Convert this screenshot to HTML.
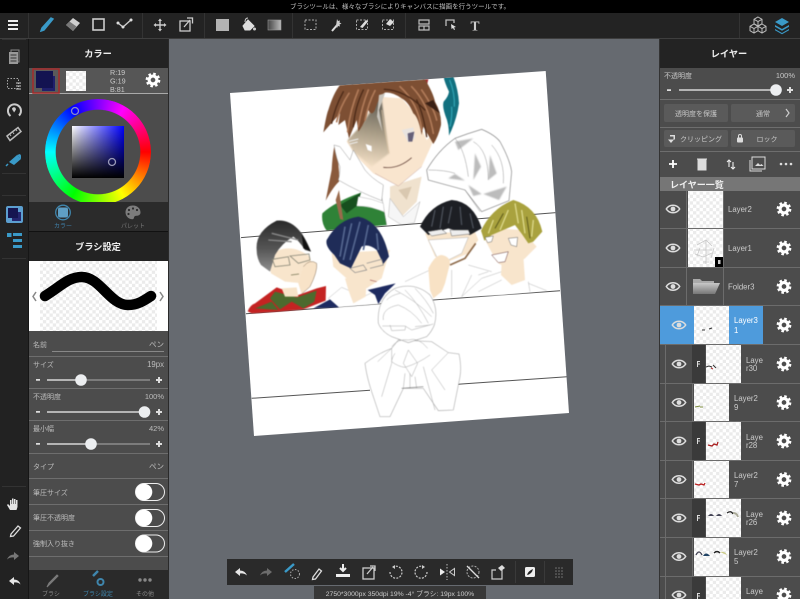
<!DOCTYPE html>
<html><head><meta charset="utf-8">
<style>
html,body{margin:0;padding:0;width:800px;height:599px;overflow:hidden;background:#666a70}
svg{position:absolute;left:0;top:0;filter:blur(.3px)}
text{font-family:"Liberation Sans","Noto Sans CJK JP",sans-serif}
#wheel{position:absolute;left:45px;top:99px;width:106px;height:103px;overflow:hidden;filter:blur(.3px)}
#wheel i{display:block;width:106px;height:106px;border-radius:50%;background:conic-gradient(from 30deg,#f0f,#f00 60deg,#ff0 120deg,#0f0 180deg,#0ff 240deg,#00f 300deg,#f0f 360deg);-webkit-mask:radial-gradient(circle at 53px 53px,transparent 42px,#000 42.6px);mask:radial-gradient(circle at 53px 53px,transparent 42px,#000 42.6px)}
#sq{position:absolute;left:72px;top:126px;width:52px;height:52px;background:linear-gradient(to bottom,transparent,#000),linear-gradient(to right,#fff,#00f)}
</style></head><body>
<svg width="800" height="599" viewBox="0 0 800 599">
<defs>
<pattern id="ck" width="6.6" height="6.6" patternUnits="userSpaceOnUse"><rect width="6.6" height="6.6" fill="#fff"/><rect width="3.3" height="3.3" fill="#ebebeb"/><rect x="3.3" y="3.3" width="3.3" height="3.3" fill="#ebebeb"/></pattern>
<symbol id="gear" overflow="visible"><circle r="3.9" fill="none" stroke="#fff" stroke-width="3.1"/><circle r="6.2" fill="none" stroke="#fff" stroke-width="2.3" stroke-dasharray="2.55 2.32"/></symbol>
<symbol id="eye" overflow="visible"><path d="M-6.7 0C-3.6-5 3.6-5 6.7 0C3.6 5-3.6 5-6.7 0Z" fill="none" stroke="#ddd" stroke-width="1.5"/><circle r="2.4" fill="#ddd"/></symbol>
<linearGradient id="shade" x1="0.5" y1="0" x2="0.4" y2="1"><stop offset="0" stop-color="#58564f"/><stop offset=".5" stop-color="#a89c86"/><stop offset="1" stop-color="#f6e2c8"/></linearGradient>
<linearGradient id="gh" x1="0" y1="0" x2="0" y2="1"><stop offset="0" stop-color="#2a2a2a"/><stop offset=".55" stop-color="#555"/><stop offset="1" stop-color="#8f8f8f"/></linearGradient>
<linearGradient id="fold" x1="0" y1="0" x2="0" y2="1"><stop offset="0" stop-color="#c8c8c8"/><stop offset="1" stop-color="#777"/></linearGradient>
<linearGradient id="tg"><stop offset="0" stop-color="#444"/><stop offset="1" stop-color="#bbb"/></linearGradient>
<clipPath id="pg"><polygon points="230,93 545.7,71 569,413 254,436"/></clipPath>
</defs>

<rect width="800" height="599" fill="#666a70"/>
<polygon points="230,93 545.7,71 569,413 254,436" fill="#fff"/>
<g clip-path="url(#pg)"><g style="filter:blur(.45px)">
<g transform="translate(225 70) scale(.33333)">
 <path d="M656 22L685 20Q700 60 702 100Q695 150 672 197Q672 170 666 150Q650 110 656 95Q670 80 672 65Q660 40 656 22Z" fill="#12707f"/>
 <path d="M674 30Q690 70 688 110M680 110Q682 140 675 170" stroke="#2fa0b0" stroke-width="4" fill="none"/>
 <path d="M592 28L610 27L606 46Z" fill="#a03030"/>
 <path d="M292 430Q330 395 408 368L395 408Q450 410 487 432L487 465L305 482Q288 460 292 430Z" fill="#2f8237"/>
 <path d="M345 405L408 368L395 408L365 430Z" fill="#174f1e"/>
 <path d="M470 380L500 345L585 325L610 330L720 360L765 425L750 450L560 465L485 465Z" fill="#fff"/>
 <path d="M470 380L485 465M720 360L765 425" stroke="#999" stroke-width="1.5" fill="none"/>
 <path d="M495 350L590 320L575 395L530 440L495 390Z" fill="#f0e2ce"/>
 <path d="M520 360L545 390L560 350Z" fill="#d9c8b0"/>
 <path d="M495 385L535 440L585 395L568 458L530 465L490 440Z" fill="#f6f6f6" stroke="#b5b5b5" stroke-width="1.5"/>
 <!-- right glove -->
 <path d="M605 300Q640 240 690 205Q730 190 770 178Q810 195 825 215Q855 270 860 305L852 392L770 425L720 360L610 330Z" fill="#fff" stroke="#777" stroke-width="1.800"/>
 <g style="filter:blur(1.5px)"><path d="M730 345L770 372L745 378ZM775 372L845 350L822 390ZM690 312L720 332L670 325ZM750 250L768 290L745 330ZM795 255L815 310L790 330ZM690 215L745 205L700 240Z" fill="#bcbcbc"/></g>
 <path d="M690 205Q720 240 730 320M745 215Q790 240 790 330M800 225Q840 270 835 340M610 300Q660 300 690 310" stroke="#999" stroke-width="1.500" fill="none"/>
 <!-- face -->
 <path d="M460 80L530 85L570 130L605 210L640 175L615 235L590 290L520 348L445 310L395 260L365 215L400 175Z" fill="#f9e5ce"/>
 <g style="filter:blur(2px)"><path d="M468 78L492 250L440 290L385 245L368 210L410 165Z" fill="url(#shade)"/></g>
 <path d="M470 120Q480 190 492 250" stroke="#d8c0a0" stroke-width="2" fill="none"/>
 <!-- hair -->
 <path d="M345 45L600 28Q625 70 630 95Q650 130 648 165Q640 200 625 222L595 170L590 195Q580 140 565 130Q550 95 530 85Q500 65 480 68Q462 78 450 120Q440 140 430 120Q420 160 400 185L395 150L372 205L360 150L340 165L345 130L295 187Q305 130 310 120Q325 70 345 45Z" fill="#7d4f33"/>
 <g fill="none" stroke-linecap="round">
 <path d="M372 70Q345 110 335 155M400 60Q375 120 368 185M430 60Q410 110 400 170M450 62Q430 100 420 150M525 50Q580 100 590 180M560 50Q610 100 625 190M590 60Q625 110 635 150" stroke="#b07a58" stroke-width="5"/>
 <path d="M355 65Q330 110 320 160M415 60Q390 110 385 170M478 58Q540 60 600 120M575 90Q595 130 605 200" stroke="#4c2a18" stroke-width="4"/>
 </g>
 <path d="M600 100L645 130L625 90Z" fill="#3a2015"/>
 <path d="M462 75L480 70L462 120L472 185L456 140Z" fill="#c9c5bd"/>
 <path d="M328 228Q345 280 342 335Q325 350 302 392Q312 340 320 300Q322 260 328 228Z" fill="#8a5a3c"/>
 <path d="M332 390L342 360L355 450L345 447Z" fill="#9a6a4c"/>
 <!-- left glove -->
 <path d="M327 225Q335 270 345 290Q345 315 340 330Q400 365 470 392L475 345Q440 325 420 300L385 240L375 270L345 230Z" fill="#fff" stroke="#999" stroke-width="1.500"/>
 <path d="M400 380L440 388L475 400L478 425L430 410L395 408Z" fill="#fff" stroke="#aaa" stroke-width="1.200"/>
 <path d="M422 222L440 228L440 245L428 240Z" fill="#fff"/>
 <path d="M372 214L400 207M374 222L398 216" stroke="#eee" stroke-width="3"/>
 <path d="M530 180L565 172L570 205L550 218Z" fill="#e9e4e0"/>
 <path d="M548 190L568 185L562 215L550 215Z" fill="#666078"/>
 <path d="M475 292Q520 298 560 263" stroke="#6a4a40" stroke-width="2.500" fill="none"/>
 <path d="M450 310L520 348L590 290" stroke="#b99" stroke-width="1.200" fill="none"/>
</g>
</g>

<g stroke="#555" stroke-width="1" fill="none">
<line x1="241" y1="237.6" x2="556" y2="212.6"/>
<line x1="246" y1="313.7" x2="560" y2="290.7"/>
<line x1="251.7" y1="398.3" x2="370" y2="390.200"/><line x1="458" y1="384.200" x2="568" y2="376.700"/>
</g>

<g style="filter:blur(.45px)">
<g transform="translate(235 200) scale(.33333)">
 <!-- char1 -->
 <path d="M38 334Q45 315 60 310L125 262L190 285L245 265L273 258L272 302L205 328L130 335L50 340Z" fill="#c42322"/>
 <path d="M120 275L185 292L245 272L238 305L205 325L170 305L135 328L105 295Z" fill="#4c6a2e"/>
 <path d="M60 325L110 305L130 330Z" fill="#4c6a2e"/>
 <path d="M140 265L185 262L190 290L150 290Z" fill="#f7e3c8"/>
 <path d="M98 170Q160 120 225 170L232 205L205 250L150 245L108 220Z" fill="#f8e5cc"/>
 <path d="M205 200Q225 175 245 190Q248 215 225 260L200 282L190 250Z" fill="#f8e3c8"/>
 <path d="M205 200Q225 175 245 190Q248 215 225 260L200 282" fill="none" stroke="#8a7560" stroke-width="1.500"/>
 <path d="M65 150Q60 95 125 62Q190 55 228 155L210 150Q190 120 175 110Q140 130 120 165L105 215L78 195Q65 175 65 150Z" fill="url(#gh)"/>
 <path d="M200 100L228 155L205 145Z" fill="#111"/>
 <path d="M110 100L190 120M100 120L170 125" stroke="#8a8a8a" stroke-width="4"/>
 <path d="M112 178L160 170L165 195L120 200ZM165 168L222 162L225 180L190 190Z" fill="none" stroke="#8a8878" stroke-width="2.500"/>
 <path d="M168 225L192 222" stroke="#775" stroke-width="2"/>
 <!-- char2 -->
 <path d="M280 295L320 262L385 290L425 272L435 312L310 322Z" fill="#fff" stroke="#aaa" stroke-width="1.200"/>
 <path d="M235 325L285 298L312 322ZM398 270L482 250L450 280L430 312L420 285Z" fill="#1d2a60"/>
 <path d="M340 270L330 235L395 235L392 290L355 310Z" fill="#f8e5cc"/>
 <path d="M290 160L465 150L440 235L395 265L340 240L295 200Z" fill="#f8e5cc"/>
 <path d="M275 120Q310 58 370 50Q440 65 462 170L445 192Q435 170 425 150Q400 130 380 140L348 205L315 190L298 165Q270 140 275 120Z" fill="#1f2c58"/>
 <path d="M330 80L315 170M350 70L325 180M375 65L345 180M400 75L385 150M425 100L430 150" stroke="#54668f" stroke-width="5" fill="none"/>
 <path d="M345 205L385 195L395 210L360 218ZM395 190L440 178L445 195L405 205" fill="none" stroke="#888" stroke-width="2"/>
 <path d="M405 240L425 245" stroke="#a66" stroke-width="2"/>
 <!-- char3 -->
 <path d="M510 245L585 210L640 215L700 195L770 215L760 280L625 295L520 300Z" fill="#fff"/>
 <path d="M510 245L585 210M700 195L770 215M650 210L650 290M680 290L710 225M730 225L760 215" stroke="#aaa" stroke-width="1.300" fill="none"/>
 <path d="M570 100L720 95L730 120L700 160L640 185L600 170Z" fill="#f8e5cc"/>
 <path d="M580 120L700 112L680 160L640 180L605 170Z" fill="#fff" stroke="#aaa" stroke-width="1.300"/>
 <path d="M555 80Q585 15 650 0Q715 5 740 85L705 105L640 85L580 105Z" fill="#1d1f24"/>
 <path d="M600 30L590 80M625 20L615 85M650 20L640 70M675 20L680 75M705 40L715 85" stroke="#4a4f58" stroke-width="4" fill="none"/>
 <path d="M578 95L620 88L635 100L590 108ZM645 90L700 90L705 102L650 108Z" fill="#eee" stroke="#666" stroke-width="1.500"/>
 <path d="M580 205Q600 165 620 165Q645 170 645 190L630 250L620 275L595 295L585 270Z" fill="#f8e2c5"/>
 <path d="M645 195L690 175L722 130" stroke="#8d6a4a" stroke-width="5" fill="none"/>
 <!-- char4 -->
 <path d="M680 290L740 235L800 215L880 260L935 272L800 285Z" fill="#fff"/>
 <path d="M680 290L740 235L800 215M880 250L935 272M730 275L800 240M880 245L885 275" stroke="#aaa" stroke-width="1.300" fill="none"/>
 <path d="M800 190L865 170L870 240L830 255L798 225Z" fill="#f8e5cc"/>
 <path d="M745 110L780 85L860 90L905 140L870 175L830 205Q800 200 785 185Z" fill="#f8e5cc"/>
 <path d="M738 92Q770 25 835 0Q905 20 922 95L895 125L880 130Q860 100 840 75L770 105L748 122Z" fill="#a9a23e"/>
 <path d="M775 60L760 100M820 30L795 90M860 30L870 100M895 60L890 110M840 10L850 70" stroke="#dcd88a" stroke-width="4" fill="none"/>
 <path d="M805 40L780 85M875 50L885 115" stroke="#5d5a1c" stroke-width="3"/>
 <path d="M770 165L820 155L810 185L790 188Z" fill="#fff" stroke="#6a4040" stroke-width="1.500"/>
 <path d="M820 115L848 112L845 140L828 135ZM750 112L775 108L770 125L758 128Z" fill="#fff" stroke="#555" stroke-width="1.300"/>
 <!-- sketch man -->
 <path d="M390 490Q430 460 470 445L490 420L590 425L640 458L672 462Q680 500 675 530L655 630L610 632L565 565L505 565L465 650L435 650L410 575Q395 530 390 490Z" fill="#fff" stroke="#a0a0a0" stroke-width="1.600"/>
 <path d="M430 370Q425 295 480 265Q540 245 585 285Q612 325 598 375Q590 395 575 410L520 428L470 410Q440 395 430 370Z" fill="#fff" stroke="#a0a0a0" stroke-width="1.600"/>
 <g fill="none" stroke="#aaa" stroke-width="1.500">
  <path d="M445 360Q440 325 490 315Q530 330 560 370M480 270Q540 300 590 350M510 270Q550 310 580 370M540 265Q575 300 595 340M455 300Q470 285 495 280"/>
  <path d="M442 378L510 378L530 390L595 372M465 375L470 392L510 390L512 378M540 380L585 375"/>
  <path d="M470 440Q490 415 520 420Q550 410 578 445M480 460Q470 475 470 485Q490 500 510 502Q550 490 585 465M520 450L505 490L530 530L548 490Z"/>
  <path d="M428 485L470 445L470 490M640 458L590 510L630 570M440 590L470 490M510 520L505 565M525 520L525 565M540 530L545 565M565 500L600 630"/>
  <path d="M500 565L565 560" stroke="#555"/>
 </g>
</g>
</g></g>

<!-- top bars -->
<rect width="800" height="13" fill="#000"/>
<text x="400" y="8.3" font-size="6.5" fill="#c0c0c0" text-anchor="middle">ブラシツールは、様々なブラシによりキャンバスに描画を行うツールです。</text>
<rect y="13" width="800" height="25" fill="#232323"/>
<rect y="38" width="800" height="1" fill="#3e3e3e"/>
<g stroke="#333" stroke-width="1"><path d="M28.5 13v25M142.5 13v25M204.500 13v25M292.500 13v25M405.500 13v25M739.500 13v25"/></g>

<!-- left sidebar -->
<rect y="39" width="28" height="560" fill="#222"/>
<rect x="28" y="39" width="1" height="560" fill="#161616"/>
<g stroke="#333"><path d="M2 39.500h24M2 173.500h24M2 195.500h24M2 258.500h24M2 486.500h24"/></g>

<!-- left panel -->
<rect x="29" y="39" width="140" height="560" fill="#4c4c4c"/>
<rect x="168" y="39" width="1" height="560" fill="#2a2a2a"/>
<rect x="29" y="39" width="139" height="29" fill="#232323"/>
<text x="98" y="57" font-size="9.200" font-weight="bold" fill="#eee" text-anchor="middle">カラー</text>
<rect x="29" y="68" width="139" height="25" fill="#565656"/>
<rect x="29" y="93" width="139" height="1" fill="#aaa"/>
<rect x="33" y="69" width="26" height="24" fill="#5a5a5a" stroke="#a52a2a" stroke-width="1.500"/>
<rect x="42" y="76" width="13" height="15" fill="#20206c"/>
<rect x="36" y="71" width="17" height="17" fill="#131351"/>
<rect x="66" y="71" width="20" height="20" fill="url(#ck)"/>
<g font-size="7.200" fill="#c8c8c8"><text x="110" y="75">R:19</text><text x="110" y="83.500">G:19</text><text x="110" y="92">B:81</text></g>
<use href="#gear" x="153" y="80"/>

<rect x="29" y="202" width="139" height="29" fill="#2b2b2b"/>
<rect x="29" y="231" width="139" height="1" fill="#111"/>
<circle cx="63" cy="212.500" r="7.300" fill="none" stroke="#3f86ad" stroke-width="1.300"/>
<rect x="58" y="207.500" width="10" height="10" rx="2" fill="#5f9fc4"/>
<text x="63" y="228" font-size="6" fill="#3f7fa8" text-anchor="middle">カラー</text>
<path d="M133 205.500c-4.600 0-7.500 3-7.500 6.800 0 3.700 3 6.900 6.800 6.900 2.300 0 1.200-2.400 2.600-3.100 1.400-.6 5.600.3 5.600-3.700 0-4-3.300-6.900-7.500-6.900Z" fill="#7c7c7c"/>
<g fill="#2b2b2b"><circle cx="129" cy="210" r="1.100"/><circle cx="133" cy="208.500" r="1.100"/><circle cx="137" cy="210" r="1.100"/><circle cx="128.500" cy="214" r="1.100"/></g>
<text x="133" y="228" font-size="6" fill="#777" text-anchor="middle">パレット</text>

<rect x="29" y="232" width="139" height="29" fill="#232323"/>
<text x="98" y="250" font-size="9.200" font-weight="bold" fill="#eee" text-anchor="middle">ブラシ設定</text>
<rect x="29" y="261" width="139" height="70" fill="#fff"/>
<rect x="40" y="261" width="117" height="70" fill="url(#ck)"/>
<path d="M45 296C60 287 68 277 82 277C100 277 110 305 128 305C138 305 145 300 151 296" fill="none" stroke="#000" stroke-width="10.500" stroke-linecap="round"/>
<path d="M36 292l-3 4.500 3 4.500M160 292l3 4.500-3 4.500" fill="none" stroke="#888" stroke-width="1.500"/>

<g fill="#bdbdbd" font-size="7">
<text x="33" y="347">名前</text>
<text x="33" y="367">サイズ</text>
<text x="33" y="399">不透明度</text>
<text x="33" y="431">最小幅</text>
<text x="33" y="469">タイプ</text>
<text x="33" y="495">筆圧サイズ</text>
<text x="33" y="520">筆圧不透明度</text>
<text x="33" y="546">強制入り抜き</text>
<g text-anchor="end" font-size="7.500"><text x="164" y="347">ペン</text><text x="164" y="367" font-size="7.800">19px</text><text x="164" y="399">100%</text><text x="164" y="431">42%</text><text x="164" y="469">ペン</text></g>
</g>
<g stroke="#6e6e6e"><path d="M52 351.500h112" stroke="#888"/><path d="M29 356.500h139M29 388.500h139M29 420.500h139M29 453.500h139M29 478.500h139M29 504.500h139M29 530.500h139M29 556.500h139"/></g>
<g fill="none" stroke-width="1.200">
<path d="M47 380h34M47 412h98M47 444h44" stroke="#f2f2f2"/>
<path d="M81 380h69M91 444h59" stroke="#999"/>
</g>
<g fill="#eceef0"><circle cx="81" cy="380" r="5.800"/><circle cx="144.500" cy="412" r="5.800"/><circle cx="91" cy="444" r="5.800"/></g>
<g fill="#ddd"><path d="M36 379h4v1.800h-4zM36 411h4v1.800h-4zM36 443h4v1.800h-4z"/><path d="M156 379h6v2h-6zM158 377h2v6h-2zM156 411h6v2h-6zM158 409h2v6h-2zM156 443h6v2h-6zM158 441h2v6h-2z"/></g>
<g fill="none" stroke="#eee" stroke-width="1"><rect x="135.500" y="483.500" width="29" height="17" rx="8.500"/><rect x="135.500" y="509.500" width="29" height="17" rx="8.500"/><rect x="135.500" y="535" width="29" height="17" rx="8.500"/></g>
<g fill="#fff"><circle cx="144" cy="492" r="8.300"/><circle cx="144" cy="518" r="8.300"/><circle cx="144" cy="543.500" r="8.300"/></g>

<rect x="29" y="570" width="139" height="29" fill="#2a2a2a"/>
<path d="M47 587l2-4 8-8 1 1-8 8Z" fill="#7a7a7a" stroke="#7a7a7a"/>
<path d="M93 576l5-5" stroke="#3f86ad" stroke-width="2.500"/><circle cx="100.500" cy="582" r="3" fill="none" stroke="#3f86ad" stroke-width="2"/>
<g fill="#888"><circle cx="140" cy="580" r="1.700"/><circle cx="145" cy="580" r="1.700"/><circle cx="150" cy="580" r="1.700"/></g>
<g font-size="6" text-anchor="middle"><text x="51" y="596" fill="#888">ブラシ</text><text x="98" y="596" fill="#3f86ad">ブラシ設定</text><text x="145" y="596" fill="#888">その他</text></g>

<!-- right panel -->
<rect x="660" y="39" width="140" height="560" fill="#4c4c4c"/>
<rect x="659" y="39" width="1" height="560" fill="#333"/>
<rect x="660" y="39" width="140" height="29" fill="#232323"/>
<text x="729" y="57" font-size="9.200" font-weight="bold" fill="#eee" text-anchor="middle">レイヤー</text>
<text x="664" y="78" font-size="7" fill="#c8c8c8">不透明度</text>
<text x="795" y="78" font-size="7.500" fill="#c8c8c8" text-anchor="end">100%</text>
<path d="M679 90h92" stroke="#f2f2f2" stroke-width="1.200"/>
<circle cx="776" cy="90" r="5.800" fill="#eceef0"/>
<path d="M667 89.200h4v1.800h-4zM787 89h6v2h-6zM789 87h2v6h-2z" fill="#ddd"/>
<g stroke="#6e6e6e"><path d="M660 99.500h140M660 127.500h140M660 151.500h140"/></g>
<g fill="#5a5a5a"><rect x="664" y="104" width="64" height="18" rx="2"/><rect x="731" y="104" width="64" height="18" rx="2"/><rect x="664" y="130" width="64" height="17" rx="2"/><rect x="731" y="130" width="64" height="17" rx="2"/></g>
<g font-size="7" fill="#c8c8c8" text-anchor="middle"><text x="696" y="116">透明度を保護</text><text x="763" y="116">通常</text><text x="701" y="141.500">クリッピング</text><text x="767" y="141.500">ロック</text></g>
<path d="M786 109l3 4-3 4" fill="none" stroke="#ccc" stroke-width="1.200"/>
<path d="M675 135h-5v1.500h3.500v3h-5.500l3 3.500 3-3.500h1Z" fill="#ddd"/>
<rect x="737" y="137.500" width="6" height="5" rx="1" fill="#ddd"/><path d="M738.500 137.500v-1.500a1.500 1.500 0 0 1 3 0v1.500" fill="none" stroke="#ddd"/>
<path d="M669 164h8M673 160v8" stroke="#fff" stroke-width="1.800"/>
<path d="M698 160h8v10h-8zM697 159h10" fill="#ddd" stroke="#ddd"/>
<path d="M729 160v7M727 162l2-2 2 2M733 169v-7M731 167l2 2 2-2" fill="none" stroke="#eee" stroke-width="1.100"/>
<rect x="752" y="157" width="13" height="12" fill="#4c4c4c" stroke="#ddd"/><path d="M750 160v11h12" fill="none" stroke="#ddd"/><path d="M755 166l3-3 2 2 1.500-1 2 2Z" fill="#ddd"/>
<g fill="#ddd"><circle cx="781" cy="164" r="1.300"/><circle cx="786" cy="164" r="1.300"/><circle cx="791" cy="164" r="1.300"/></g>
<rect x="660" y="177" width="140" height="14" fill="#767676"/>
<text x="670" y="188" font-size="9" font-weight="bold" fill="#f0f0f0">レイヤー一覧</text>

<g stroke="#6c6c6c"><path d="M660 228.500h140M660 267.500h140M660 305.500h140M660 344.500h140M660 383.500h140M660 421.500h140M660 460.500h140M660 498.500h140M660 537.500h140M660 576.500h140"/></g>
<g stroke="#6c6c6c"><path d="M686.500 191v115M723.500 191v115M665.500 306v293M692.500 306v293"/></g>

<rect x="688" y="191" width="35" height="37" fill="url(#ck)"/>
<rect x="688" y="229" width="35" height="38" fill="url(#ck)"/>
<g stroke="#c8c8c8" fill="none" stroke-width=".8"><path d="M697 245l9-5 6 6M694 250h18M695 254l8 3 9-4M706 240v24M700 248l-3 8M714 248l-3 10M703 262h6"/></g>
<rect x="715" y="257" width="8" height="10" fill="#000"/><rect x="718" y="260" width="2.500" height="4" fill="#ccc"/>
<path d="M693 279h7l2 2h12v4h-21Z" fill="#aaa"/><path d="M693 283h27l-5 11h-22Z" fill="url(#fold)"/>

<rect x="660" y="306" width="34" height="38" fill="#4e9bdc"/>
<rect x="729" y="306" width="34" height="38" fill="#4e9bdc"/>
<rect x="694" y="306" width="35" height="38" fill="url(#ck)"/>
<path d="M702 330h3M709 329l3-1" stroke="#333" stroke-width="1"/>

<g fill="#3a3a3a"><rect x="692" y="345" width="13" height="38"/><rect x="692" y="422" width="13" height="38"/><rect x="692" y="499" width="13" height="38"/><rect x="692" y="577" width="13" height="22"/></g>
<g fill="url(#ck)">
<rect x="706" y="345" width="35" height="38"/><rect x="694" y="384" width="35" height="37"/>
<rect x="706" y="422" width="35" height="38"/><rect x="694" y="461" width="35" height="37"/>
<rect x="706" y="499" width="35" height="38"/><rect x="694" y="538" width="35" height="38"/>
<rect x="706" y="577" width="35" height="22"/>
</g>
<g fill="#ddd"><path d="M697 361h3v1h-2v1.500h2v1h-2v2.500h-1zM697 438h3v1h-2v1.500h2v1h-2v2.500h-1zM697 515h3v1h-2v1.500h2v1h-2v2.500h-1zM697 593h3v1h-2v1.500h2v1h-2v2.500h-1z"/></g>
<path d="M706 367l3-1 3 1M713 365l3 3" stroke="#333" stroke-width="1" fill="none"/><path d="M711 368l2 1" stroke="#a33"/>
<path d="M695 407l5-1M700 407h3" stroke="#7a8a3a" stroke-width="1.100" fill="none"/>
<path d="M708 445l4 1 2-2 3 1 1-3" stroke="#a22" stroke-width="1.300" fill="none"/>
<path d="M695 484l4 1 2-1 3 1 1-2" stroke="#b22" stroke-width="1.300" fill="none"/>
<path d="M708 516q3-4 6 0ZM716 516q3-4 6 0Z" fill="#445"/><path d="M727 513q4-3 6 1" fill="none" stroke="#222" stroke-width="1.200"/><path d="M733 513q4 0 5 4" fill="none" stroke="#aa9" stroke-width="2"/>
<path d="M696 555q3-6 6 0" fill="none" stroke="#445" stroke-width="1.300"/><path d="M703 556q3-5 7 0Z" fill="#246"/><path d="M714 553q3-3 6 0" fill="none" stroke="#222" stroke-width="1.300"/><path d="M720 552q5-1 7 3Z" fill="#cc8"/>

<use href="#eye" x="673" y="209"/><use href="#eye" x="673" y="248"/><use href="#eye" x="673" y="286.500"/>
<use href="#eye" x="679" y="325"/><use href="#eye" x="679" y="364"/><use href="#eye" x="679" y="402.500"/><use href="#eye" x="679" y="441"/><use href="#eye" x="679" y="479.500"/><use href="#eye" x="679" y="518"/><use href="#eye" x="679" y="556.500"/><use href="#eye" x="679" y="595"/>
<use href="#gear" x="784" y="209"/><use href="#gear" x="784" y="248"/><use href="#gear" x="784" y="286.500"/><use href="#gear" x="784" y="325"/><use href="#gear" x="784" y="364"/><use href="#gear" x="784" y="402.500"/><use href="#gear" x="784" y="441"/><use href="#gear" x="784" y="479.500"/><use href="#gear" x="784" y="518"/><use href="#gear" x="784" y="556.500"/><use href="#gear" x="784" y="595"/>
<g font-size="7.800" fill="#ccc">
<text x="728" y="212">Layer2</text><text x="728" y="251">Layer1</text><text x="728" y="289.500">Folder3</text>
<g fill="#fff"><text x="734" y="323">Layer3</text><text x="734" y="333">1</text></g>
<text x="746" y="363">Laye</text><text x="746" y="371">r30</text>
<text x="734" y="401">Layer2</text><text x="734" y="410">9</text>
<text x="746" y="440">Laye</text><text x="746" y="448">r28</text>
<text x="734" y="478">Layer2</text><text x="734" y="487">7</text>
<text x="746" y="517">Laye</text><text x="746" y="525">r26</text>
<text x="734" y="555">Layer2</text><text x="734" y="564">5</text>
<text x="746" y="594">Laye</text>
</g>

<!-- top toolbar icons -->
<path d="M8 21h10M8 25h10M8 29h10" stroke="#eee" stroke-width="2"/>
<path d="M41 31l3-1 9-11-2-1-9 10Z" fill="#3a9ac8" stroke="#3a9ac8" stroke-width="1.500"/>
<path d="M66 25l7-7 7 5-7 8Z" fill="#cfcfcf"/><path d="M66 25l3.500-3.500 7 5-3.500 4.500Z" fill="#777"/>
<rect x="93" y="19" width="11" height="11" fill="none" stroke="#ccc" stroke-width="1.600"/>
<path d="M118 23l5 4 9-8" fill="none" stroke="#ccc" stroke-width="1.400"/><g fill="#ddd"><circle cx="118" cy="23" r="1.500"/><circle cx="123" cy="27" r="1.500"/><circle cx="131" cy="20" r="1.500"/></g>
<path d="M160 20v10M155 25h10" stroke="#ccc" stroke-width="1.400"/><path d="M158 21l2-2.500 2 2.500ZM158 29l2 2.500 2-2.500ZM156 23l-2.500 2 2.500 2ZM164 23l2.500 2-2.500 2Z" fill="#ccc"/>
<rect x="180" y="21" width="10" height="10" fill="none" stroke="#ccc" stroke-width="1.300"/><path d="M184 27l6-7M187 18h5.500v5.500" fill="none" stroke="#ccc" stroke-width="1.300"/>
<rect x="216" y="19" width="13" height="12" fill="#b3b3b3"/>
<path d="M243 26l5-6 6 6-4 4h-5Z" fill="#ddd" stroke="#ddd"/><path d="M245 22q0-4 3-4" fill="none" stroke="#ccc"/><circle cx="254.500" cy="29" r="1.500" fill="#ccc"/>
<rect x="268" y="20" width="13" height="10" fill="url(#tg)" stroke="#999" stroke-width=".6"/>
<rect x="305" y="20" width="11" height="9.500" fill="none" stroke="#aaa" stroke-dasharray="2 1.500"/>
<path d="M332 31l6-7" stroke="#ddd" stroke-width="2"/><path d="M337 19l1 2 2-.5-.5 2 2 1-2 1 .5 2-2-.5-1 2-1-2" fill="#ccc"/>
<rect x="356.500" y="20" width="11" height="9.500" fill="none" stroke="#aaa" stroke-dasharray="2 1.500"/><path d="M360 27l6-7 2 1.500-5.500 6.500Z" fill="#ddd"/>
<rect x="382.500" y="20" width="11" height="9.500" fill="none" stroke="#aaa" stroke-dasharray="2 1.500"/><path d="M386 24l4-5 4 3-4 4Z" fill="#ddd"/>
<path d="M419 20h10v4h-10zM419 26h10v4h-10zM424 26v4" fill="none" stroke="#bbb" stroke-width="1.200"/>
<path d="M446 26v-6h8v3" fill="none" stroke="#bbb" stroke-width="1.300"/><path d="M451 24l5 3-2 .5 1 2-1 .5-1-2-1.500 1Z" fill="#ddd"/>
<text x="475" y="30.500" font-size="13.500" font-weight="bold" fill="#ccc" text-anchor="middle" style="font-family:'Liberation Serif',serif">T</text>
<g fill="none" stroke="#bbb" stroke-width="1"><path d="M758 17l4 2.300v4.400l-4 2.300-4-2.300v-4.400ZM754 19.300l4 2.300 4-2.300M758 21.600v4.400"/><path d="M754 24l4 2.300v4.400l-4 2.300-4-2.300v-4.400ZM750 26.300l4 2.300 4-2.300M754 28.600v4.400"/><path d="M762 24l4 2.300v4.400l-4 2.300-4-2.300v-4.400ZM758 26.300l4 2.300 4-2.300M762 28.600v4.400"/></g>
<g fill="#3a9ac8"><path d="M782 18l7 4-7 4-7-4Z"/><path d="M775 25l7 4 7-4 0 1.700-7 4-7-4Z"/><path d="M775 29l7 4 7-4 0 1.300-7 4-7-4Z"/></g>

<!-- side icons -->
<rect x="11" y="50" width="8" height="12" fill="none" stroke="#888"/><rect x="9" y="52" width="9" height="12" fill="#999"/><path d="M10.500 55h6M10.500 58h6M10.500 61h6" stroke="#333"/>
<rect x="7.500" y="78.500" width="11" height="10" fill="none" stroke="#aaa" stroke-dasharray="1.500 1.500"/><path d="M16 83h5M16 86h5M16 89h5" stroke="#ccc" stroke-width="1.100"/>
<path d="M10.500 116a6.500 6.500 0 1 1 8.500-.5" fill="none" stroke="#ccc" stroke-width="2"/><path d="M12 108l4 1.500-2 3Z" fill="#ddd"/><circle cx="14" cy="109" r="1.800" fill="#ccc"/>
<path d="M7 136l11-8.500 3 4-11 9Z" fill="none" stroke="#bbb" stroke-width="1.500"/><path d="M11 136l-1-1.500M14 134l-1-1.500M17 131l-1-1.500" stroke="#bbb"/>
<path d="M9 162l8-7 4 4-7 6Z" fill="#3a9ac8"/><path d="M17 155l3-1 1 1.500 0 3.500" fill="#3a9ac8"/><path d="M6 166l2-2" stroke="#3a9ac8" stroke-width="1.500"/>
<rect x="6" y="206" width="17" height="17" rx="2" fill="#5c9fd0"/><rect x="12" y="212" width="9" height="9" fill="#25266e"/><rect x="8" y="208" width="10" height="10" fill="#161651"/>
<rect x="7" y="233" width="4.500" height="4" fill="#3a9ac8"/><path d="M13 233h9v3h-9zM13 239h9v3h-9zM13 245h9v3h-9z" fill="#3a9ac8"/>
<path d="M10 510l-3-5 1-1 2 2v-6h1.500v4h.5v-5.500h1.500v5.500h.5v-5h1.500v5h.5v-4h1.500v7l-1 3Z" fill="#e6e6e6"/>
<path d="M11 534l7-8 2.500 2-7 8-3 .5Z" fill="none" stroke="#ddd" stroke-width="1.300"/>
<path d="M19 556l-5-4v2.500q-5 0-7 5q3-2.500 7-2v2.500Z" fill="#777"/>
<path d="M9 581l5-4v2.500q5 0 6.500 5q-2.500-2.500-6.500-2v2.500Z" fill="#e6e6e6"/>

<!-- bottom floating toolbar -->
<rect x="227" y="559" width="346" height="26" fill="#2a2a2a"/>
<rect x="314" y="586" width="172" height="13" fill="#383838"/>
<text x="400" y="596" font-size="6.800" fill="#ccc" text-anchor="middle">2750*3000px 350dpi 19% -4° ブラシ: 19px 100%</text>
<path d="M235 572l5-4v2.500q5 0 7 5q-3-2.500-7-2v2.500Z" fill="#e6e6e6"/>
<path d="M272 572l-5-4v2.500q-5 0-7 5q3-2.500 7-2v2.500Z" fill="#6c6c6c"/>
<path d="M285 572l9-8" stroke="#3a9ac8" stroke-width="2.500"/><circle cx="295" cy="574" r="4.500" fill="none" stroke="#aaa" stroke-dasharray="1.500 1.500"/>
<path d="M313 577l6-8 2.500 2-6 8-3 .5Z" fill="none" stroke="#ddd" stroke-width="1.300"/>
<path d="M343 564v6M340 568l3 3 3-3" fill="none" stroke="#eee" stroke-width="2"/><path d="M336 574h14v3h-14z" fill="#eee"/>
<rect x="363" y="568" width="11" height="11" fill="none" stroke="#ccc" stroke-width="1.300"/><path d="M367 574l6-7M370 566h5v5" fill="none" stroke="#ccc" stroke-width="1.300"/>
<path d="M390 572a6 6 0 1 0 3-5" fill="none" stroke="#ccc" stroke-width="1.200" stroke-dasharray="2 1.300"/><path d="M392 567l3-2v4Z" fill="#ccc"/>
<path d="M427 572a6 6 0 1 1-3-5" fill="none" stroke="#ccc" stroke-width="1.200" stroke-dasharray="2 1.300"/><path d="M425 567l-3-2v4Z" fill="#ccc"/>
<path d="M447 564v16" stroke="#bbb" stroke-dasharray="1.500 1.500"/><path d="M445 572l-5-3.500v7Z" fill="#eee"/><path d="M449.500 572l5-3.500v7Z" fill="none" stroke="#ccc"/>
<circle cx="473" cy="572" r="6" fill="none" stroke="#aaa" stroke-dasharray="2 1.300"/><path d="M467 566l12 12" stroke="#ddd" stroke-width="1.300"/>
<path d="M502 570v9h-10v-9h4" fill="none" stroke="#ccc" stroke-width="1.200"/><path d="M498 568l4-3 3 3-4 3Z" fill="#ddd"/>
<path d="M515.500 561v22M544.500 561v22" stroke="#3a3a3a"/>
<rect x="525" y="567" width="10" height="10" rx="1.500" fill="#eee"/><path d="M527 575q1-4 6-6q-1 5-6 6Z" fill="#222"/>
<g fill="#777"><circle cx="556" cy="568" r=".8"/><circle cx="559" cy="568" r=".8"/><circle cx="562" cy="568" r=".8"/><circle cx="556" cy="571" r=".8"/><circle cx="559" cy="571" r=".8"/><circle cx="562" cy="571" r=".8"/><circle cx="556" cy="574" r=".8"/><circle cx="559" cy="574" r=".8"/><circle cx="562" cy="574" r=".8"/><circle cx="556" cy="577" r=".8"/><circle cx="559" cy="577" r=".8"/><circle cx="562" cy="577" r=".8"/></g>
</svg>
<div id="wheel"><i></i></div>
<div id="sq"></div>
<svg width="800" height="599" viewBox="0 0 800 599">
<circle cx="75" cy="111" r="3.500" fill="none" stroke="#8a8ac8" stroke-width="1.300"/>
<circle cx="112" cy="162" r="3.500" fill="none" stroke="#9a9ab8" stroke-width="1.300"/>
</svg>
</body></html>
